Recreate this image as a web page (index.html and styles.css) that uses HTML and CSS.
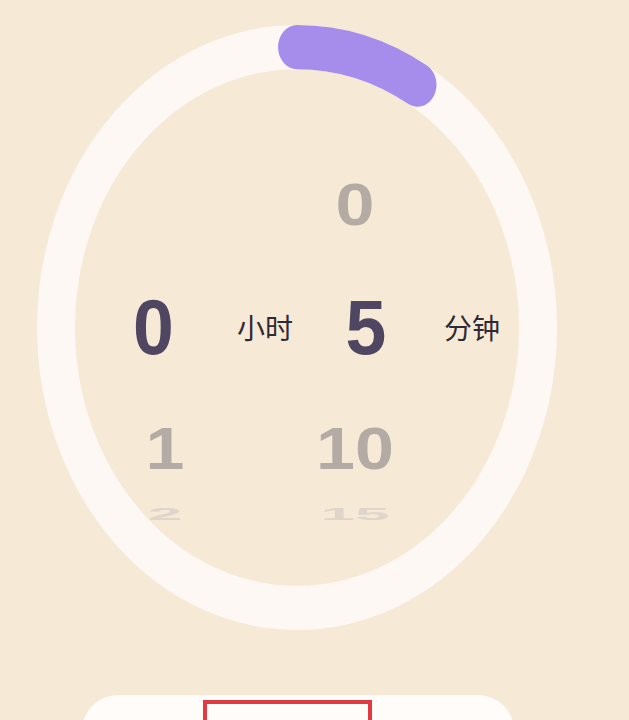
FILE: index.html
```html
<!DOCTYPE html>
<html lang="zh-CN">
<head>
<meta charset="utf-8">
<title>计时器</title>
<link rel="stylesheet" href="styles.css">
</head>
<body>
<div class="page">
  <div class="dial">
    <svg class="ring" viewBox="0 0 520 520" preserveAspectRatio="none" aria-hidden="true">
      <circle cx="260" cy="260" r="241" fill="none" stroke="#FEF8F4" stroke-width="38"/>
      <path d="M260 19 A241 241 0 0 1 380.5 51.3" fill="none" stroke="#A68DEB" stroke-width="38" stroke-linecap="round"/>
    </svg>
    <div class="picker">
      <div class="col col-hour">
        <div class="slot"></div>
        <div class="slot"><span class="num sel sel-hour">0</span></div>
        <div class="slot"><span class="num near">1</span></div>
        <div class="slot slot-far"><span class="num far">2</span></div>
      </div>
      <div class="col col-label">
        <div class="slot"></div>
        <div class="slot"><span class="unit">小时</span></div>
      </div>
      <div class="col col-min">
        <div class="slot"><span class="num near">0</span></div>
        <div class="slot"><span class="num sel sel-min">5</span></div>
        <div class="slot"><span class="num near">10</span></div>
        <div class="slot slot-far"><span class="num far">15</span></div>
      </div>
      <div class="col col-label2">
        <div class="slot"></div>
        <div class="slot"><span class="unit">分钟</span></div>
      </div>
    </div>
  </div>
  <div class="sheet">
    <div class="mark"></div>
  </div>
</div>
</body>
</html>
```
FILE: styles.css
```css
html, body {
  margin: 0;
  padding: 0;
  background: #F6E9D6;
  overflow: hidden;
}

body {
  width: 629px;
  height: 720px;
  font-family: "Liberation Sans", "Noto Sans CJK SC", sans-serif;
}

.page {
  display: flex;
  flex-direction: column;
  padding-top: 25px;
  height: 720px;
  box-sizing: border-box;
  overflow: hidden;
}

.dial {
  position: relative;
  width: 520px;
  height: 605px;
  margin-left: 37px;
  flex: none;
}

.ring {
  position: absolute;
  left: 0;
  top: 0;
  width: 520px;
  height: 605px;
}

.picker {
  position: relative;
  display: flex;
  padding-left: 68px;
  padding-top: 119px;
}

.col {
  display: flex;
  flex-direction: column;
}

.col-hour { width: 120px; }
.col-label { width: 80px; }
.col-min { width: 100px; }
.col-label2 { width: 134px; }

.slot {
  height: 122px;
  display: flex;
  align-items: center;
  justify-content: center;
}

.slot-far {
  height: 10px;
  overflow: visible;
}

.num {
  display: inline-block;
  font-family: "Liberation Sans", sans-serif;
  font-weight: 700;
  line-height: 1;
}

.sel {
  font-size: 78px;
  color: #4F4662;
  transform: scaleX(0.94);
}

.sel-hour { padding-right: 24px; }
.sel-min { padding-left: 24px; }

.near {
  font-size: 70px;
  color: #B4ABA5;
  transform: scaleY(0.84);
}

.far {
  font-size: 62px;
  color: #E0D5CB;
  transform: scaleY(0.26);
}

.unit {
  font-family: "Noto Sans CJK SC", sans-serif;
  font-size: 28px;
  font-weight: 400;
  color: #2F2A35;
  line-height: 1;
}

.sheet {
  margin-top: 65px;
  margin-left: 82px;
  width: 432px;
  height: 80px;
  flex: none;
  background: #FFFCFA;
  border-radius: 36px 36px 0 0;
  padding-top: 5px;
  box-sizing: border-box;
}

.mark {
  margin-left: 121px;
  width: 169px;
  height: 60px;
  border: 4px solid #E23A44;
  box-sizing: border-box;
}
```
